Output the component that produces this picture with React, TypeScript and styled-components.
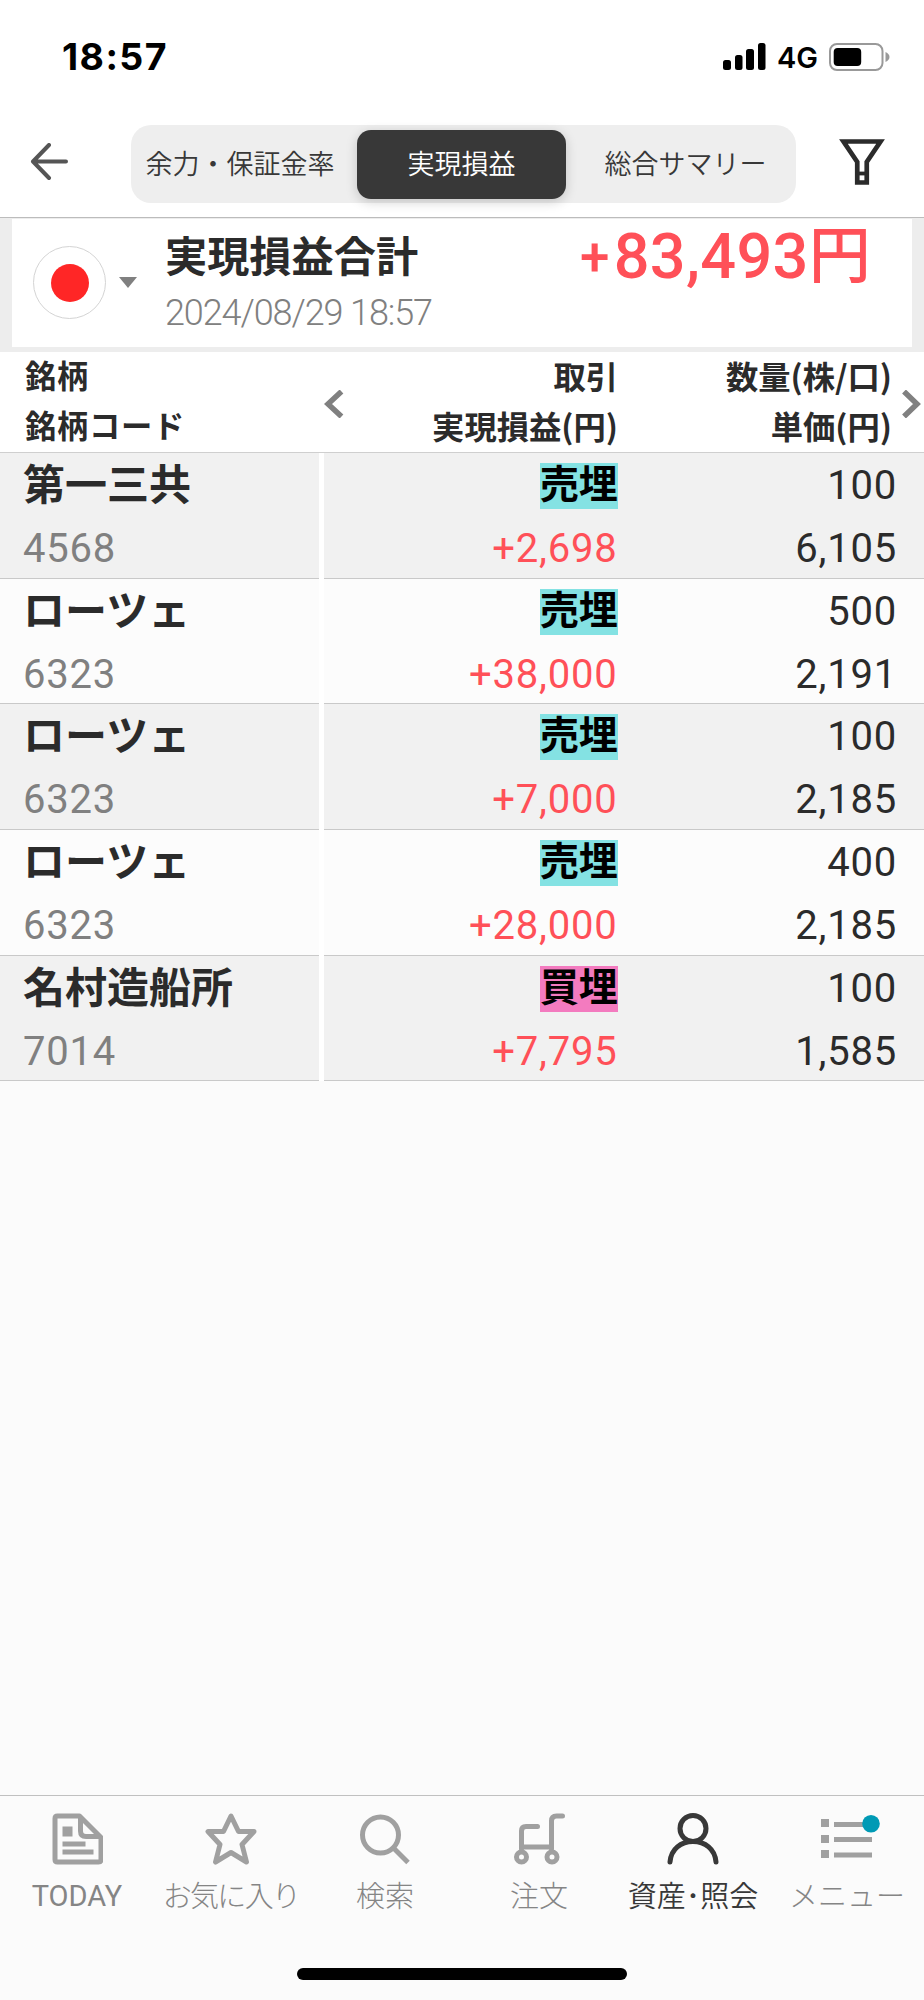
import React from "react";
import styled, { createGlobalStyle } from "styled-components";

const jp = '"Noto Sans CJK JP", sans-serif';
const num = 'Roboto, "Noto Sans CJK JP", sans-serif';
const up = "#ff5058";

const GlobalStyle = createGlobalStyle`
  * { box-sizing: border-box; }
  body { margin: 0; background: #fbfbfb; font-family: ${jp}; color: #2b2b2b; }
  button { border: 0; padding: 0; background: none; font: inherit; color: inherit; }
  svg { display: block; flex: none; }
`;

const Screen = styled.div`
  width: 924px;
  height: 2000px;
  display: flex;
  flex-direction: column;
  background: #fbfbfb;
  overflow: hidden;
  white-space: nowrap;
`;

const StatusBar = styled.div`
  height: 113px;
  padding: 0 34px 0 62px;
  display: flex;
  align-items: center;
  justify-content: space-between;
  background: #fff;
  color: #000;
  font-family: Inter, sans-serif;
`;
const Clock = styled.span`
  font-size: 37.5px;
  font-weight: 700;
  line-height: 44px;
  padding-top: 1px;
  letter-spacing: 1.4px;
`;
const StatusIcons = styled.div`
  display: flex;
  align-items: center;
  gap: 11px;
`;
const Network = styled.span`
  font-size: 29px;
  font-weight: 600;
  line-height: 36px;
  padding-top: 3px;
`;

const Header = styled.header`
  height: 105px;
  padding: 12px 39px 14px 30px;
  display: flex;
  align-items: center;
  border-bottom: 1px solid #bcbcbc;
  background: #fff;
`;
const BackIcon = styled.svg`
  margin-bottom: 5px;
`;
const FilterIcon = styled.svg`
  margin-bottom: 5px;
`;
const Tabs = styled.div`
  width: 665px;
  height: 78px;
  margin: 0 auto 0 62px;
  padding: 5px 4px;
  display: grid;
  grid-template-columns: 222px 209px 226px;
  border-radius: 20px;
  background: #eee;
`;
const Tab = styled.button<{ $active?: boolean }>`
  height: 68.5px;
  padding-bottom: 2px;
  border-radius: 14px;
  font-size: 27px;
  font-weight: 350;
  line-height: 40px;
  background: ${(p) => (p.$active ? "#383838" : "transparent")};
  color: ${(p) => (p.$active ? "#fff" : "#383838")};
  box-shadow: ${(p) => (p.$active ? "0 3px 12px rgba(0,0,0,.18)" : "none")};
  &:first-child { padding-right: 12px; }
  &:last-child { padding-left: 13px; }
`;

const Summary = styled.section`
  height: 134px;
  padding: 1px 12px 5px;
  background: #ededed;
`;
const SummaryCard = styled.div`
  height: 128px;
  padding: 0 41px 0 21px;
  display: flex;
  align-items: flex-start;
  background: #fff;
`;
const Flag = styled.div`
  width: 73px;
  height: 73px;
  margin: 27px 13px 0 0;
  display: flex;
  align-items: center;
  justify-content: center;
  border: 1px solid #d4d4d4;
  border-radius: 50%;
`;
const FlagDot = styled.div`
  width: 38px;
  height: 38px;
  border-radius: 50%;
  background: #ff2626;
`;
const Caret = styled.div`
  margin: 58px 28px 0 0;
  border: 9.5px solid transparent;
  border-top: 11px solid #808080;
  border-bottom: 0;
`;
const SummaryText = styled.div`
  display: flex;
  flex-direction: column;
`;
const SummaryTitle = styled.div`
  height: 64px;
  padding-top: 5px;
  font-size: 42.2px;
  font-weight: 700;
  line-height: 60px;
`;
const SummaryDate = styled.div`
  font-family: ${num};
  font-size: 36px;
  font-weight: 300;
  line-height: 61px;
  letter-spacing: -1.1px;
  color: #808080;
`;
const Total = styled.div`
  margin-left: auto;
  display: flex;
  color: ${up};
  font-family: ${num};
  font-size: 63px;
  font-weight: 500;
  line-height: 76px;
  letter-spacing: 0.3px;
`;
const Sign = styled.span`
  margin-right: 4px;
  font-size: 53px;
`;
const Yen = styled.span`
  font-family: ${jp};
  font-size: 62px;
  font-weight: 500;
  line-height: 65px;
`;

const grid = "324px 292px 1fr";

const ColumnHead = styled.div`
  height: 101px;
  display: grid;
  grid-template-columns: 324px 294px 274px 1fr;
  border-bottom: 1px solid #cfcfcf;
  background: #fff;
`;
const HeadCell = styled.div<{ $left?: boolean }>`
  display: flex;
  flex-direction: column;
  align-items: ${(p) => (p.$left ? "flex-start" : "flex-end")};
  padding-left: ${(p) => (p.$left ? 25 : 0)}px;
  font-size: ${(p) => (p.$left ? 31.3 : 32.3)}px;
  letter-spacing: ${(p) => (p.$left ? 0.7 : 0)}px;
  font-weight: 700;
  line-height: 50.7px;
  margin-top: -2.5px;
  position: relative;
`;
const Chevron = styled.svg<{ $x: number }>`
  position: absolute;
  top: 40px;
  left: ${(p) => p.$x}px;
`;

const Row = styled.div<{ $odd: boolean }>`
  height: 125.66px;
  display: grid;
  grid-template-columns: ${grid};
  background: ${(p) => (p.$odd ? "#f1f1f1" : "#fcfcfc")};
  border-bottom: 1px solid #c9c9c9;
`;
const Cell = styled.div<{ $end?: number }>`
  display: flex;
  flex-direction: column;
  align-items: flex-end;
  padding-right: ${(p) => p.$end ?? 0}px;
`;
const NameCell = styled.div`
  height: 125.66px;
  padding-left: 23px;
  border-right: 5px solid #fff;
`;
const Name = styled.div`
  height: 63px;
  font-size: 42px;
  font-weight: 700;
  line-height: 57px;
`;
const Figure = styled.div<{ $tone?: string }>`
  height: 63px;
  font-family: ${num};
  font-size: 40px;
  line-height: 65px;
  letter-spacing: 0.8px;
  color: ${(p) => p.$tone ?? "#2b2b2b"};
`;
const Profit = styled(Figure)`
  margin-right: -1.5px;
`;
const BadgeLine = styled.div`
  height: 63px;
  padding-top: 10px;
  margin-right: -2px;
`;
const Badge = styled.div<{ $buy?: boolean }>`
  height: 46px;
  font-size: 39.2px;
  font-weight: 700;
  line-height: 36px;
  color: #000;
  background: ${(p) => (p.$buy ? "#f37bbf" : "#84e2e3")};
`;

const NavBar = styled.nav`
  height: 205px;
  margin-top: auto;
  border-top: 1px solid #c0c0c0;
  display: flex;
  flex-direction: column;
  align-items: center;
`;
const NavItems = styled.div`
  width: 924px;
  height: 172px;
  display: grid;
  grid-template-columns: repeat(6, 154px);
`;
const NavItem = styled.button<{ $active?: boolean }>`
  display: flex;
  flex-direction: column;
  align-items: center;
  padding-top: 17px;
  color: ${(p) => (p.$active ? "#383838" : "#a0a0a0")};
`;
const NavLabel = styled.span<{ $latin?: boolean; $track?: number; $active?: boolean }>`
  margin-top: 8px;
  font-family: ${(p) => (p.$latin ? num : jp)};
  font-size: 29px;
  font-weight: ${(p) => (p.$latin ? 400 : p.$active ? 350 : 300)};
  line-height: ${(p) => (p.$latin ? 46 : 42)}px;
  letter-spacing: ${(p) => p.$track ?? 0}px;
  color: ${(p) => (p.$active ? "#383838" : "#858585")};
`;
const HomeIndicator = styled.div`
  width: 330px;
  height: 12px;
  border-radius: 6px;
  background: #000;
`;

const trades = [
  { name: "第一三共", code: "4568", side: "売埋", profit: "+2,698", qty: "100", price: "6,105" },
  { name: "ローツェ", code: "6323", side: "売埋", profit: "+38,000", qty: "500", price: "2,191" },
  { name: "ローツェ", code: "6323", side: "売埋", profit: "+7,000", qty: "100", price: "2,185" },
  { name: "ローツェ", code: "6323", side: "売埋", profit: "+28,000", qty: "400", price: "2,185" },
  { name: "名村造船所", code: "7014", side: "買埋", profit: "+7,795", qty: "100", price: "1,585" },
];

const stroke = { fill: "none", stroke: "currentColor", strokeWidth: 5 };

const NewsIcon = () => (
  <svg width="52" height="52" viewBox="-1 0 52 52" {...stroke}>
    <path d="M5.5 3H27.5L49 24.500V46.500Q49 49 46.500 49H5.500Q3 49 3 46.500V5.500Q3 3 5.500 3Z" strokeLinejoin="round" />
    <path d="M28.500 4V18Q28.500 23.500 34 23.500H48" />
    <path d="M10.500 13.500h10v10h-10zM10.500 28.500h23v5h-23zM10.500 36.500h31v5h-31z" fill="currentColor" stroke="none" />
  </svg>
);
const StarIcon = () => (
  <svg width="52" height="52" viewBox="0 0 52 52" {...stroke} strokeLinejoin="round">
    <path d="M26 3L33.500 18.500L49 18.500L37 31.500L41.500 49L26 39.500L10.500 49L15 31.500L3 18.500L18.500 18.500Z" />
  </svg>
);
const SearchIcon = () => (
  <svg width="52" height="52" viewBox="0 0 52 52" {...stroke}>
    <circle cx="21.500" cy="22" r="18" />
    <path d="M34 34.500L49 49.500" />
  </svg>
);
const CartIcon = () => (
  <svg width="52" height="52" viewBox="0 0 52 52" {...stroke}>
    <path d="M8.500 36V18Q8.500 13.500 13 13.500H24.500M8.500 34H38.500M38.500 36V8Q38.500 3 43.500 3H49.500" strokeLinecap="round" />
    <circle cx="8.500" cy="44" r="5" />
    <circle cx="39" cy="44" r="5" />
  </svg>
);
const PersonIcon = () => (
  <svg width="52" height="52" viewBox="0 0 52 52" {...stroke} strokeLinecap="round">
    <circle cx="26" cy="15.500" r="13" />
    <path d="M3 49C4 36 14 28.500 26 28.500S48 36 49 49" />
  </svg>
);
const MenuIcon = () => (
  <svg width="68" height="52" viewBox="-8 0 68 52" fill="currentColor">
    <path d="M0 6h8v8H0zM0 22h8v8H0zM0 37h8v8H0zM13 9h38v5H13zM13 24h38v5H13zM13 39.500h38v5H13z" />
    <circle cx="50" cy="10.700" r="8.800" fill="#009ab5" />
  </svg>
);

export default function App() {
  return (
    <>
      <GlobalStyle />
      <Screen>
        <StatusBar>
          <Clock>18:57</Clock>
          <StatusIcons>
            <svg width="43" height="28" viewBox="0 0 43 28">
              <rect x="0" y="17" width="8" height="10" rx="2.500" />
              <rect x="12" y="12" width="7.500" height="15" rx="2.500" />
              <rect x="23" y="6" width="8" height="21" rx="2.500" />
              <rect x="35" y="0" width="7.500" height="27" rx="2.500" />
            </svg>
            <Network>4G</Network>
            <svg width="61" height="28" viewBox="0 0 61 28">
              <rect x="1" y="1" width="52.500" height="26" rx="7" fill="none" stroke="#999" strokeWidth="2" />
              <rect x="4.700" y="5" width="27.500" height="18" rx="4" />
              <path d="M56.500 9Q60.500 11 60.500 14T56.500 19Z" fill="#999" />
            </svg>
          </StatusIcons>
        </StatusBar>

        <Header>
          <BackIcon width="39" height="38" viewBox="0 0 39 38" fill="none" stroke="#555" strokeWidth="4" strokeLinecap="round" strokeLinejoin="round">
            <path d="M36 18.500H4M19 2L3 18.500L19 35" />
          </BackIcon>
          <Tabs>
            <Tab>余力・保証金率</Tab>
            <Tab $active>実現損益</Tab>
            <Tab>総合サマリー</Tab>
          </Tabs>
          <FilterIcon width="46" height="46" viewBox="0 0 46 46" fill="none" stroke="#2b2b2b" strokeWidth="4.700">
            <path d="M4.500 2.500H41.500L27.750 23V43.500H18.250V23Z" />
            <path d="M18 34.500H28" strokeWidth="3.800" />
          </FilterIcon>
        </Header>

        <Summary>
          <SummaryCard>
            <Flag><FlagDot /></Flag>
            <Caret />
            <SummaryText>
              <SummaryTitle>実現損益合計</SummaryTitle>
              <SummaryDate>2024/08/29 18:57</SummaryDate>
            </SummaryText>
            <Total><Sign>+</Sign>83,493<Yen>円</Yen></Total>
          </SummaryCard>
        </Summary>

        <ColumnHead>
          <HeadCell $left>
            <span>銘柄</span>
            <span>銘柄コード</span>
          </HeadCell>
          <HeadCell>
            <Chevron $x={0} width="20" height="28" viewBox="0 0 20 28" fill="none" stroke="#808080" strokeWidth="5.500">
              <path d="M17.500 1.500L4 14L17.500 26.500" />
            </Chevron>
            <span>取引</span>
            <span>実現損益(円)</span>
          </HeadCell>
          <HeadCell>
            <Chevron $x={284} width="20" height="28" viewBox="0 0 20 28" fill="none" stroke="#808080" strokeWidth="5.500">
              <path d="M2 1.500L15 14L2 26.500" />
            </Chevron>
            <span>数量(株/口)</span>
            <span>単価(円)</span>
          </HeadCell>
        </ColumnHead>

        {trades.map((t, i) => (
          <Row key={i} $odd={i % 2 === 0}>
            <NameCell>
              <Name>{t.name}</Name>
              <Figure $tone="#808080">{t.code}</Figure>
            </NameCell>
            <Cell>
              <BadgeLine><Badge $buy={t.side === "買埋"}>{t.side}</Badge></BadgeLine>
              <Profit $tone={up}>{t.profit}</Profit>
            </Cell>
            <Cell $end={27}>
              <Figure>{t.qty}</Figure>
              <Figure>{t.price}</Figure>
            </Cell>
          </Row>
        ))}

        <NavBar>
          <NavItems>
            <NavItem><NewsIcon /><NavLabel $latin>TODAY</NavLabel></NavItem>
            <NavItem><StarIcon /><NavLabel $track={-1.7}>お気に入り</NavLabel></NavItem>
            <NavItem><SearchIcon /><NavLabel>検索</NavLabel></NavItem>
            <NavItem><CartIcon /><NavLabel>注文</NavLabel></NavItem>
            <NavItem $active><PersonIcon /><NavLabel $active>資産･照会</NavLabel></NavItem>
            <NavItem><MenuIcon /><NavLabel>メニュー</NavLabel></NavItem>
          </NavItems>
          <HomeIndicator />
        </NavBar>
      </Screen>
    </>
  );
}
